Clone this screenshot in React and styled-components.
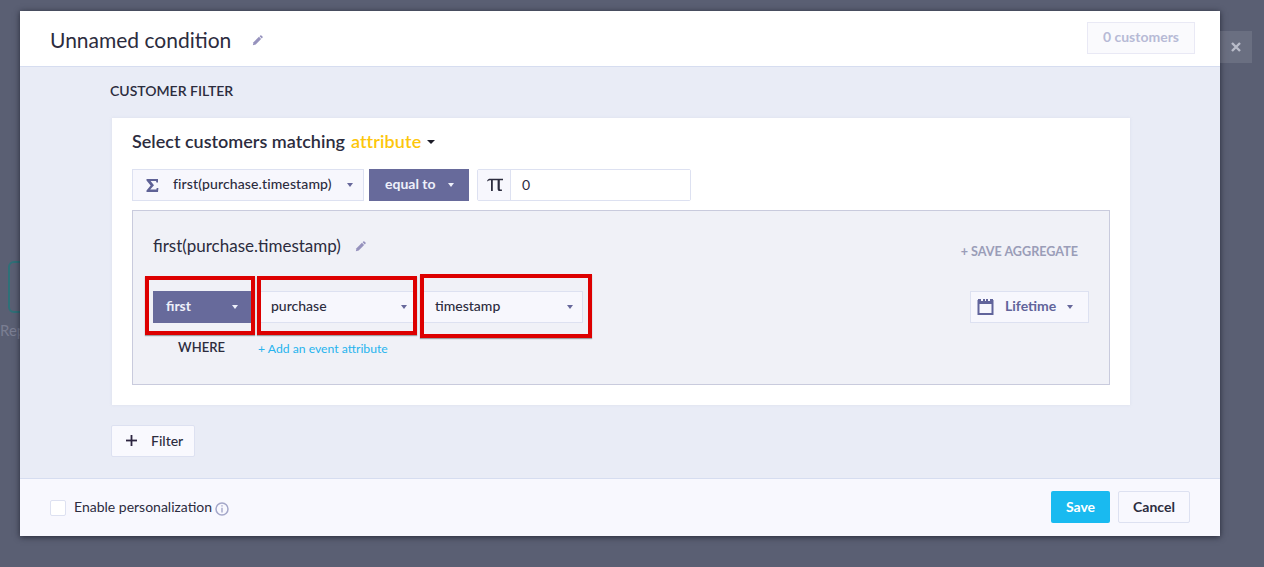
import React from 'react'
import styled, { createGlobalStyle } from 'styled-components'

const Global = createGlobalStyle`
html, body { margin:0; padding:0; height:100%; overflow:hidden; }
body { font-family:'Lato','Liberation Sans',sans-serif; color:#2c2c3e; font-size:14px; }
* { box-sizing:border-box; }
`

const Page = styled.div`
width:1264px;
height:567px;
background:#5a5f73;
padding:261px 0 0 8px;
position:relative;
`

const BehindTile = styled.div`
width:40px;
height:52px;
border:2px solid #2f7078;
border-radius:6px;
`

const BehindText = styled.div`
margin-top:8px;
margin-left:-8px;
font-size:15px;
color:#7a7e92;
`

const Modal = styled.div`
position:absolute;
left:20px;
top:11px;
width:1200px;
height:525px;
background:#e9ecf6;
display:flex;
flex-direction:column;
box-shadow:0 1px 6px rgba(20,22,35,.75);
`

const Close = styled.div`
position:absolute;
left:1220px;
top:31px;
width:32px;
height:32px;
background:rgba(255,255,255,.1);
display:flex;
align-items:center;
justify-content:center;
color:#b9bcc9;
`

const Header = styled.div`
height:56px;
flex:none;
background:#fff;
border-bottom:1px solid #d6ddf0;
display:flex;
align-items:center;
padding:0 25px 0 30px;
`

const Title = styled.div`
font-size:21px;
line-height:28px;
color:#2c2c3e;
margin:3px 21px 0 0;
`

const HeaderPencil = styled.span`
display:flex;
margin-top:3px;
`

const Count = styled.div`
margin-left:auto;
margin-top:-1px;
width:108px;
height:32px;
background:#fafafd;
border:1px solid #e9e9f5;
color:#b7bad6;
font-size:14px;
font-weight:700;
padding-bottom:3px;
display:flex;
align-items:center;
justify-content:center;
`

const Body = styled.div`
flex:1;
padding:15px 90px 0 90px;
`

const Section = styled.div`
font-size:14px;
font-weight:600;
line-height:18px;
color:#2c2c3e;
`

const Card = styled.div`
margin:18px 0 0 2px;
width:1018px;
height:287px;
background:#fff;
box-shadow:0 0 3px rgba(170,176,205,.2);
padding:11px 20px 0;
`

const Heading = styled.div`
font-size:18px;
line-height:24px;
font-weight:600;
display:flex;
align-items:center;
color:#2c2c3e;
`

const Accent = styled.span`
color:#fdc60a;
margin-left:6px;
letter-spacing:.1px;
`

const Caret = styled.span`
display:inline-block;
width:0;
height:0;
flex:none;
margin-top:3px;
border-left:3px solid transparent;
border-right:3px solid transparent;
border-top:4px solid ${({ color }) => color || '#67689b'};
`

const HeadCaret = styled(Caret)`
margin:2px 0 0 6px;
border-left-width:4px;
border-right-width:4px;
`

const Row = styled.div`
display:flex;
margin-top:16px;
height:32px;
`

const Select = styled.div`
height:32px;
width:${({ w }) => w}px;
margin-right:${({ mr }) => mr || 0}px;
flex:none;
display:flex;
align-items:center;
justify-content:space-between;
font-size:14px;
font-weight:500;
padding:0 ${({ pr }) => pr || 9}px 3px ${({ pl }) => pl || 10}px;
background:${({ dark }) => (dark ? '#676a9b' : '#f7f7fd')};
border:1px solid ${({ dark }) => (dark ? '#676a9b' : '#dde1f1')};
color:${({ dark }) => (dark ? '#eef0fa' : '#2c2c3e')};
`

const SelectText = styled.span`
font-weight:${({ bold }) => (bold ? 700 : 500)};
`

const IconText = styled.span`
flex:1;
margin-left:${({ ml }) => ml || 14}px;
color:${({ color }) => color || 'inherit'};
font-weight:${({ bold }) => (bold ? 700 : 500)};
letter-spacing:${({ spread }) => (spread ? '.12px' : 0)};
`

const IconSlot = styled.span`
display:flex;
margin-top:${({ mt }) => mt || 0}px;
`

const NumberGroup = styled.div`
margin-left:8px;
width:214px;
height:32px;
display:flex;
border:1px solid #dde1f1;
border-radius:2px;
`

const Prefix = styled.div`
width:33px;
background:#f7f7fd;
border-right:1px solid #dde1f1;
display:flex;
align-items:center;
justify-content:center;
padding-left:2px;
`

const NumberValue = styled.div`
flex:1;
padding-left:11px;
line-height:29px;
font-size:14px;
background:#fff;
`

const Panel = styled.div`
margin-top:9px;
width:978px;
height:175px;
background:#f0f1f7;
border:1px solid #c9cbdd;
padding:0 20px;
`

const PanelTop = styled.div`
display:flex;
align-items:center;
height:70px;
`

const PanelTitle = styled.div`
font-size:17px;
line-height:22px;
margin:-1px 14px 0 0;
color:#2c2c3e;
`

const SaveAggregate = styled.div`
margin-left:auto;
margin-top:10px;
margin-right:11px;
font-size:12.6px;
font-weight:700;
color:#9a9db8;
`

const Builder = styled.div`
display:flex;
height:32px;
margin-top:10px;
position:relative;
`

const Spacer = styled.div`
flex:1;
`

const Marker = styled.div`
position:absolute;
left:${({ x }) => x}px;
top:${({ y }) => y}px;
width:${({ w }) => w}px;
height:${({ h }) => h}px;
border:4px solid #dd0000;
box-shadow:0 1px 1px rgba(60,60,60,.45);
pointer-events:none;
`

const Meta = styled.div`
display:flex;
margin-top:16px;
line-height:17px;
`

const Where = styled.div`
width:97px;
text-align:center;
font-size:13px;
font-weight:600;
`

const AddLink = styled.div`
margin-left:8px;
padding-top:1px;
font-size:12.2px;
color:#27b4ee;
`

const FilterButton = styled.div`
margin-top:20px;
margin-left:1px;
width:84px;
height:32px;
background:#f9f9fe;
border:1px solid #dde1f1;
border-radius:2px;
display:flex;
align-items:center;
padding:0 0 1px 14px;
font-size:14px;
font-weight:500;
gap:14px;
`

const Footer = styled.div`
height:58px;
flex:none;
background:#f8f8fe;
border-top:1px solid #d6ddf0;
display:flex;
align-items:center;
padding:0 30px 2px;
`

const Check = styled.div`
width:16px;
height:16px;
margin-top:2px;
background:#fff;
border:1px solid #dde1f1;
border-radius:2px;
margin-right:8px;
`

const FooterLabel = styled.div`
font-size:14px;
color:#2c2c3e;
margin-right:3px;
`

const InfoSlot = styled.span`
display:flex;
margin-top:5px;
`

const Actions = styled.div`
margin-left:auto;
display:flex;
gap:8px;
`

const SaveButton = styled.div`
width:59px;
height:32px;
background:#19baf0;
border-radius:2px;
color:#fff;
font-weight:700;
font-size:14px;
display:flex;
align-items:center;
justify-content:center;
`

const CancelButton = styled(SaveButton)`
width:72px;
background:#f8f8fe;
border:1px solid #dde1f1;
color:#2c2c3e;
`

const Pencil = () => (
  <svg width="11" height="11" viewBox="0 0 13 13" fill="#9692bd">
    <path d="M1 12l.8-3.4 6.4-6.4 2.6 2.6-6.4 6.4z" />
    <path d="M9 1.4l.8-.8a1 1 0 0 1 1.3 0l1.3 1.3a1 1 0 0 1 0 1.3l-.8.8z" />
  </svg>
)

const Sigma = () => (
  <svg width="13" height="13" viewBox="0 0 13 13" fill="#5f6296">
    <path d="M0.5 0H12v3.4h-1.6L10 2H4.6L8 6.3 4.2 10.6H10.4l.3-1.6H12.4L12 13H0.5v-1.6L4.6 6.6 0.5 1.6z" />
  </svg>
)

const PiSign = () => (
  <svg width="16" height="14" viewBox="0 0 16 14" fill="#2c2c3e">
    <path d="M0 3.200C.6 1.400 1.700.8 3.400.8H16v1.500h-3.200v8.200c0 .8.300 1.100 1 1.100h1.100V13h-2.200c-1.300 0-2.100-.7-2.100-2.300V2.300H5.800v10.700H4V2.300c-1.600 0-2.500.2-3.300 1z" />
  </svg>
)

const Calendar = () => (
  <svg width="17" height="17" viewBox="0 0 17 17" fill="none">
    <path d="M1.500 3h14v13h-14z" stroke="#61649b" strokeWidth="2" />
    <path d="M1 1h15v5H1z" fill="#61649b" />
    <path d="M4 0h2v3H4zM8 0h1v3H8zM11 0h2v3h-2z" fill="#f7f7fd" />
  </svg>
)

const Info = () => (
  <svg width="14" height="14" viewBox="0 0 14 14" fill="none">
    <circle cx="7" cy="7" r="6" stroke="#a4a7c9" strokeWidth="1.5" />
    <path d="M6.300 3.200h1.400v1.400H6.300zM6.300 5.800h1.400v4.800H6.300z" fill="#a4a7c9" />
  </svg>
)

const Plus = () => (
  <svg width="11" height="11" viewBox="0 0 11 11" fill="#2c2440">
    <path d="M4.600 0h1.800v11H4.600z" />
    <path d="M0 4.600h11v1.800H0z" />
  </svg>
)

const Cross = () => (
  <svg width="10" height="10" viewBox="0 0 10 10" stroke="#b9bcc9" strokeWidth="2.4">
    <path d="M1 1l8 8M9 1l-8 8" />
  </svg>
)

export default function App() {
  return (
    <Page>
      <Global />
      <BehindTile />
      <BehindText>Rep</BehindText>
      <Modal>
        <Header>
          <Title>Unnamed condition</Title>
          <HeaderPencil><Pencil /></HeaderPencil>
          <Count>0 customers</Count>
        </Header>
        <Body>
          <Section>CUSTOMER FILTER</Section>
          <Card>
            <Heading>
              Select customers matching <Accent>attribute</Accent>
              <HeadCaret color="#1c1c28" />
            </Heading>
            <Row>
              <Select w={232} mr={5} pl={13} pr={10}>
                <IconSlot mt={3}><Sigma /></IconSlot>
                <IconText spread>first(purchase.timestamp)</IconText>
                <Caret />
              </Select>
              <Select w={100} dark pl={15} pr={14}>
                <SelectText bold>equal to</SelectText>
                <Caret color="#eef0fa" />
              </Select>
              <NumberGroup>
                <Prefix><PiSign /></Prefix>
                <NumberValue>0</NumberValue>
              </NumberGroup>
            </Row>
            <Panel>
              <PanelTop>
                <PanelTitle>first(purchase.timestamp)</PanelTitle>
                <Pencil />
                <SaveAggregate>+ SAVE AGGREGATE</SaveAggregate>
              </PanelTop>
              <Builder>
                <Select w={100} mr={7} dark pl={12} pr={14}>
                  <SelectText bold>first</SelectText>
                  <Caret color="#eef0fa" />
                </Select>
                <Select w={155} mr={8} pr={7}>
                  <SelectText>purchase</SelectText>
                  <Caret />
                </Select>
                <Select w={160} pl={11}>
                  <SelectText>timestamp</SelectText>
                  <Caret />
                </Select>
                <Spacer />
                <Select w={119} pl={6} pr={15}>
                  <IconSlot mt={1}><Calendar /></IconSlot>
                  <IconText color="#61649b" bold ml={11}>Lifetime</IconText>
                  <Caret />
                </Select>
                <Marker x={-8} y={-15} w={110} h={59} />
                <Marker x={104} y={-15} w={160} h={59} />
                <Marker x={267} y={-17} w={172} h={64} />
              </Builder>
              <Meta>
                <Where>WHERE</Where>
                <AddLink>+ Add an event attribute</AddLink>
              </Meta>
            </Panel>
          </Card>
          <FilterButton>
            <Plus />
            Filter
          </FilterButton>
        </Body>
        <Footer>
          <Check />
          <FooterLabel>Enable personalization</FooterLabel>
          <InfoSlot><Info /></InfoSlot>
          <Actions>
            <SaveButton>Save</SaveButton>
            <CancelButton>Cancel</CancelButton>
          </Actions>
        </Footer>
      </Modal>
      <Close>
        <Cross />
      </Close>
    </Page>
  )
}
